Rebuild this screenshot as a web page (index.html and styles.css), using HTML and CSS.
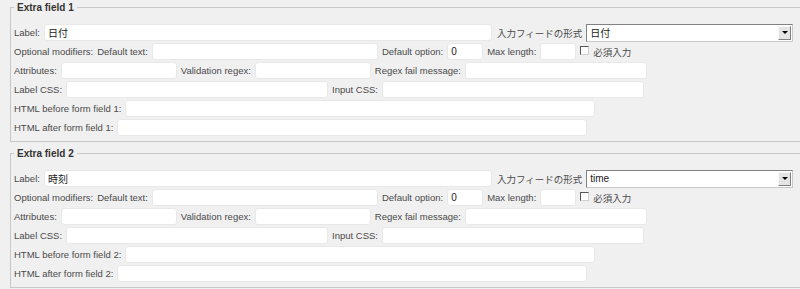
FILE: index.html
```html
<!DOCTYPE html>
<html lang="ja">
<head>
    <meta charset="UTF-8">
    <title>Extra fields</title>
    <link rel="stylesheet" href="styles.css">
</head>
<body>
    <fieldset class="extra">
        <legend>Extra field 1</legend>
        <div class="row">
            <span>Label:</span>
            <input type="text" class="w-label" value="日付">
            <span class="jp">入力フィードの形式</span>
            <div class="select"><span class="select-text">日付</span><span class="select-btn"></span></div>
        </div>
        <div class="row">
            <span>Optional modifiers:</span>
            <span>Default text:</span>
            <input type="text" class="w-deftext">
            <span>Default option:</span>
            <input type="text" class="w-small" value="0">
            <span>Max length:</span>
            <input type="text" class="w-small">
            <span class="check"></span>
            <span>必須入力</span>
        </div>
        <div class="row">
            <span>Attributes:</span>
            <input type="text" class="w-attr">
            <span>Validation regex:</span>
            <input type="text" class="w-attr">
            <span>Regex fail message:</span>
            <input type="text" class="w-fail">
        </div>
        <div class="row">
            <span>Label CSS:</span>
            <input type="text" class="w-css">
            <span>Input CSS:</span>
            <input type="text" class="w-css">
        </div>
        <div class="row">
            <span>HTML before form field 1:</span>
            <input type="text" class="w-html">
        </div>
        <div class="row">
            <span>HTML after form field 1:</span>
            <input type="text" class="w-html">
        </div>
    </fieldset>

    <fieldset class="extra">
        <legend>Extra field 2</legend>
        <div class="row">
            <span>Label:</span>
            <input type="text" class="w-label" value="時刻">
            <span class="jp">入力フィードの形式</span>
            <div class="select"><span class="select-text">time</span><span class="select-btn"></span></div>
        </div>
        <div class="row">
            <span>Optional modifiers:</span>
            <span>Default text:</span>
            <input type="text" class="w-deftext">
            <span>Default option:</span>
            <input type="text" class="w-small" value="0">
            <span>Max length:</span>
            <input type="text" class="w-small">
            <span class="check"></span>
            <span>必須入力</span>
        </div>
        <div class="row">
            <span>Attributes:</span>
            <input type="text" class="w-attr">
            <span>Validation regex:</span>
            <input type="text" class="w-attr">
            <span>Regex fail message:</span>
            <input type="text" class="w-fail">
        </div>
        <div class="row">
            <span>Label CSS:</span>
            <input type="text" class="w-css">
            <span>Input CSS:</span>
            <input type="text" class="w-css">
        </div>
        <div class="row">
            <span>HTML before form field 2:</span>
            <input type="text" class="w-html">
        </div>
        <div class="row">
            <span>HTML after form field 2:</span>
            <input type="text" class="w-html">
        </div>
    </fieldset>
</body>
</html>
```

FILE: styles.css
```css
body {
    font-family: "Liberation Sans", "Noto Sans CJK JP", sans-serif;
    font-size: 9.5px;
    color: #4a4a4a;
    background: #f0f0f0;
    margin: 2px 0 0 10px;
    overflow: hidden;
}
.extra {
    width: 800px;
    margin: 0 0 6px 0;
    padding: 10px 3px 4px 3px;
    border: 1px solid #c8c8c8;
    border-right: none;
}
.extra legend {
    font-weight: bold;
    font-size: 10px;
    color: #333;
    padding: 0 3px;
    margin-left: 0;
}
.row {
    display: flex;
    align-items: center;
    gap: 4px;
    height: 19px;
    white-space: nowrap;
}
.row input {
    box-sizing: border-box;
    height: 17px;
    padding: 0 3px;
    border: 1px solid #e8e8e8;
    border-radius: 3px;
    background: white;
    font-family: "Liberation Sans", "Noto Sans CJK JP", sans-serif;
    font-size: 10px;
    color: #222;
    margin: 0;
}
.jp { margin-left: 1px; }
.w-label { width: 448px; }
.w-deftext { width: 226px; }
.w-small { width: 36px; }
.w-attr { width: 116px; }
.w-fail { width: 182px; }
.w-css { width: 262px; }
.w-html { width: 470px; }

.select {
    box-sizing: border-box;
    width: 207px;
    height: 18px;
    display: flex;
    align-items: center;
    background: white;
    border: 1px solid #828282;
    border-right-color: #c8c8c8;
    border-bottom-color: #c8c8c8;
    padding: 0 1px 0 3px;
    color: #222;
    font-size: 10px;
}
.select-text { flex: 1; }
.select-btn {
    box-sizing: border-box;
    width: 13px;
    height: 14px;
    background: #e4e4e4;
    border: 1px solid;
    border-color: #f8f8f8 #808080 #808080 #f8f8f8;
    display: flex;
    align-items: center;
    justify-content: center;
}
.select-btn::after {
    content: "";
    border-left: 3px solid transparent;
    border-right: 3px solid transparent;
    border-top: 3px solid #000;
}
.check {
    box-sizing: border-box;
    width: 9px;
    height: 9px;
    background: white;
    border: 1px solid;
    border-color: #555 #d0d0d0 #d0d0d0 #555;
    margin-top: -3px;
}
```
